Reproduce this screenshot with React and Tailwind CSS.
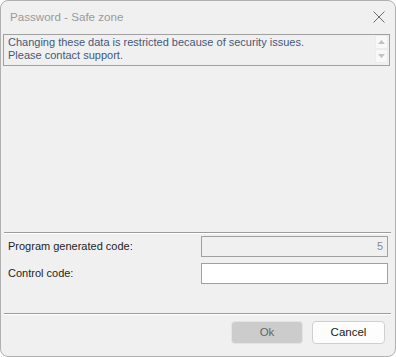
import React from "react";

const font = { fontFamily: '"Liberation Sans", Arial, sans-serif' };

const ScrollButton = ({ down }) => (
  <div className="w-[13px] h-[14px] bg-[#f8f8f8] border border-[#ececec] flex items-center justify-center">
    <svg width="7" height="4" viewBox="0 0 7 4">
      {down ? (
        <polygon points="0,0 7,0 3.5,4" fill="#c2c2c2" />
      ) : (
        <polygon points="0,4 7,4 3.5,0" fill="#c2c2c2" />
      )}
    </svg>
  </div>
);

const Separator = () => (
  <div className="ml-[3px] w-[387px]">
    <div className="h-px bg-[#9c9c9c]"></div>
    <div className="h-px bg-white"></div>
  </div>
);

export default function App() {
  return (
    <div
      className="w-[396px] h-[357px] bg-[#f0f0f0] border border-[#b0b0b0] rounded-[8px] flex flex-col overflow-hidden text-[11px]"
      style={font}
    >
      {/* title bar */}
      <div className="h-[32px] flex items-center justify-between pl-[9px] pr-[10px]">
        <span className="text-[#9a9a9a] text-[11.6px]">Password - Safe zone</span>
        <svg width="12" height="12" viewBox="0 0 12 12">
          <path d="M0.5 0.5 L11.5 11.5 M11.5 0.5 L0.5 11.5" stroke="#6b6b6b" strokeWidth="1" />
        </svg>
      </div>

      {/* message box */}
      <div className="mt-px ml-[2px] w-[387px] h-[32px] border border-[#a0a0a0] flex">
        <div className="flex-1 pl-[4px] pt-[1px] leading-[13px] text-[#44587a]">
          <div>Changing these data is restricted because of security issues.</div>
          <div>Please contact support.</div>
        </div>
        <div className="flex flex-col pr-[1px]">
          <ScrollButton />
          <ScrollButton down />
        </div>
      </div>

      <div className="h-[166px]"></div>
      <Separator />

      {/* fields */}
      <div className="mt-[2px] flex items-center h-[21px]">
        <span className="pl-[7px] w-[200px] text-[#1e1e1e]">Program generated code:</span>
        <div className="w-[187px] h-[21px] border border-[#a0a0a0] bg-[#f0f0f0] flex items-center justify-end pr-[4px] text-[#8a8a8a]">
          5
        </div>
      </div>
      <div className="mt-[6px] flex items-center h-[21px]">
        <span className="pl-[7px] w-[200px] text-[#1e1e1e]">Control code:</span>
        <div className="w-[187px] h-[21px] border border-[#a0a0a0] bg-white"></div>
      </div>

      <div className="h-[29px]"></div>
      <Separator />

      {/* buttons */}
      <div className="mt-[6px] flex justify-end gap-[9px] pr-[10px]">
        <button className="w-[72px] h-[23px] rounded-[4px] border border-[#e4e4e4] bg-[#cccccc] text-[#666] text-[11.5px]">
          Ok
        </button>
        <button className="w-[73px] h-[23px] rounded-[4px] border border-[#d0d0d0] bg-[#fdfdfd] text-[#1a1a1a] text-[11.5px]">
          Cancel
        </button>
      </div>
    </div>
  );
}
